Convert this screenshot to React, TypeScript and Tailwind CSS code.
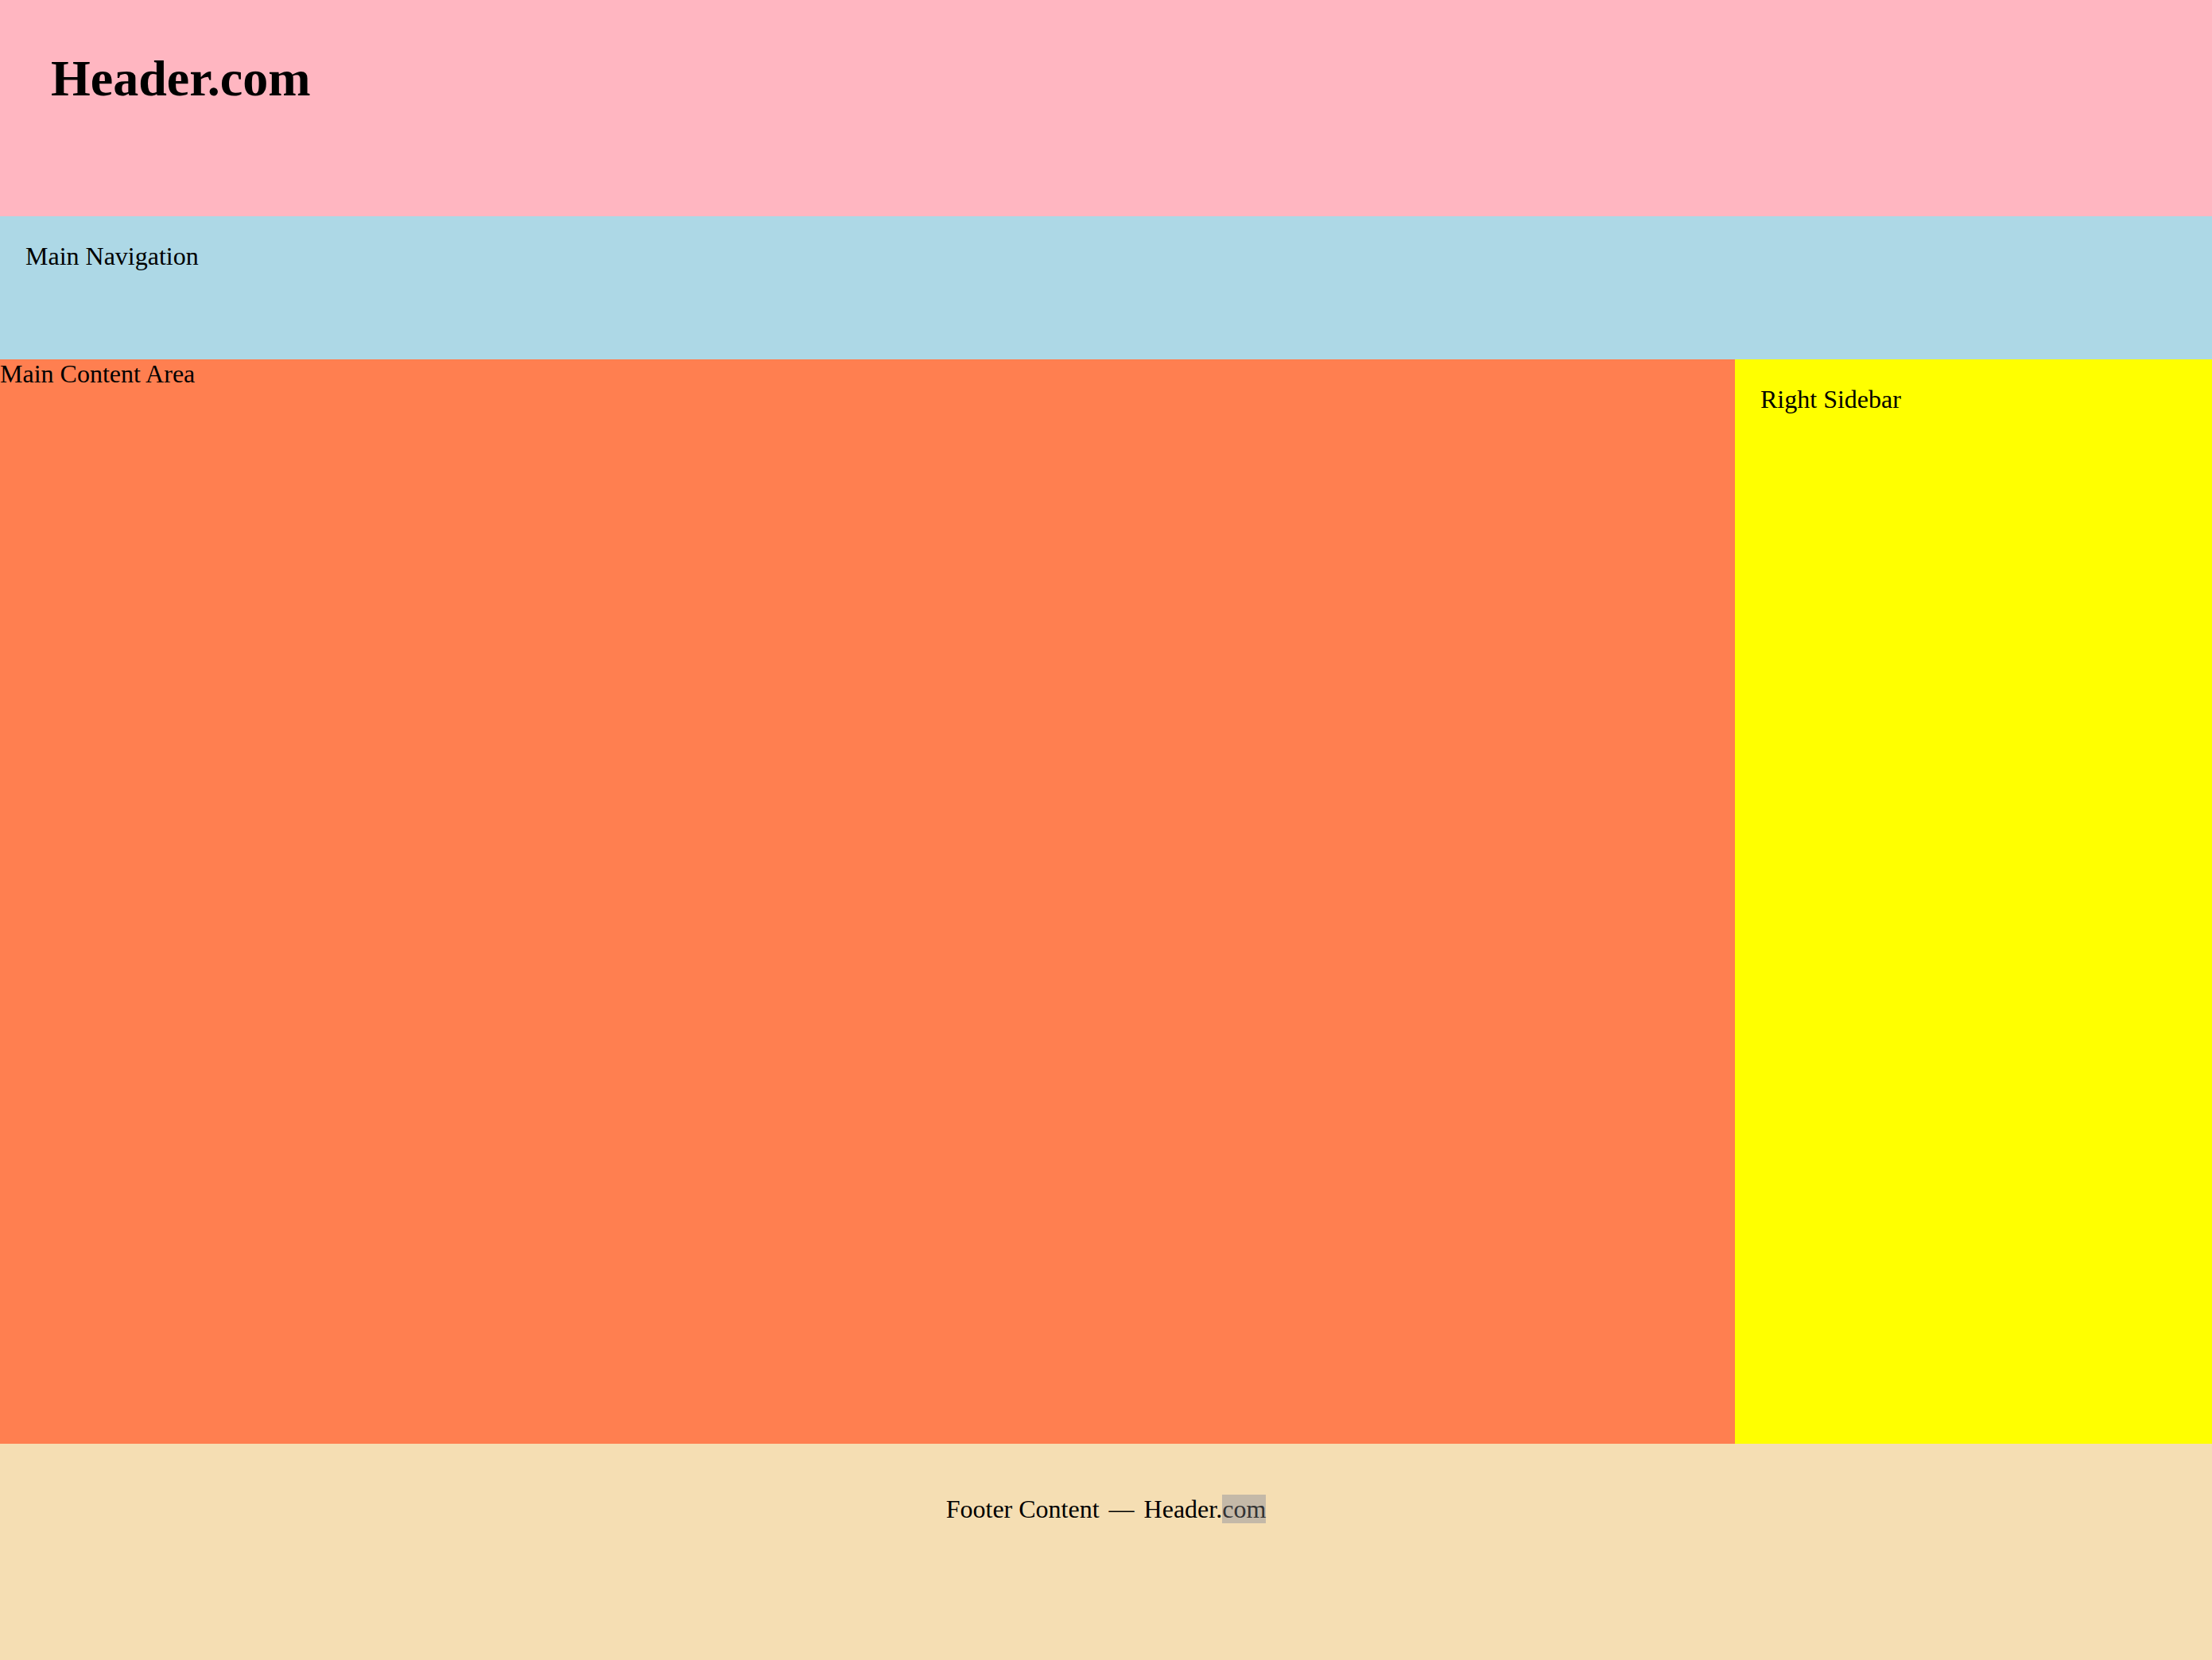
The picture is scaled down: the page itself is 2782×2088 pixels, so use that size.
const App = () => {
  return (
    <div className="flex flex-col w-full h-[2088px] font-['Liberation_Serif','Times_New_Roman',serif] text-black leading-[normal]">
      {/* Header */}
      <header className="h-[272px] shrink-0 bg-[#ffb6c1] pl-[64px] pt-[62px]">
        <h1 className="text-[64px] font-bold leading-[normal]">Header.com</h1>
      </header>

      {/* Navigation */}
      <nav className="h-[180px] shrink-0 bg-[#add8e6] p-[32px] text-[32px]">
        Main Navigation
      </nav>

      {/* Body */}
      <div className="flex h-[1364px] shrink-0">
        <main className="flex-1 bg-[#ff7f50] text-[32px]">Main Content Area</main>
        <aside className="w-[600px] shrink-0 bg-[#ffff00] p-[32px] text-[32px]">
          Right Sidebar
        </aside>
      </div>

      {/* Footer */}
      <footer className="h-[272px] shrink-0 bg-[#f5deb3] pt-[64px] text-center text-[32px]">
        Footer Content <span className="mx-[4px]">—</span> Header.
        <span className="bg-[#c4b9a8] text-[#333333]">com</span>
      </footer>
    </div>
  );
};

export default App;
